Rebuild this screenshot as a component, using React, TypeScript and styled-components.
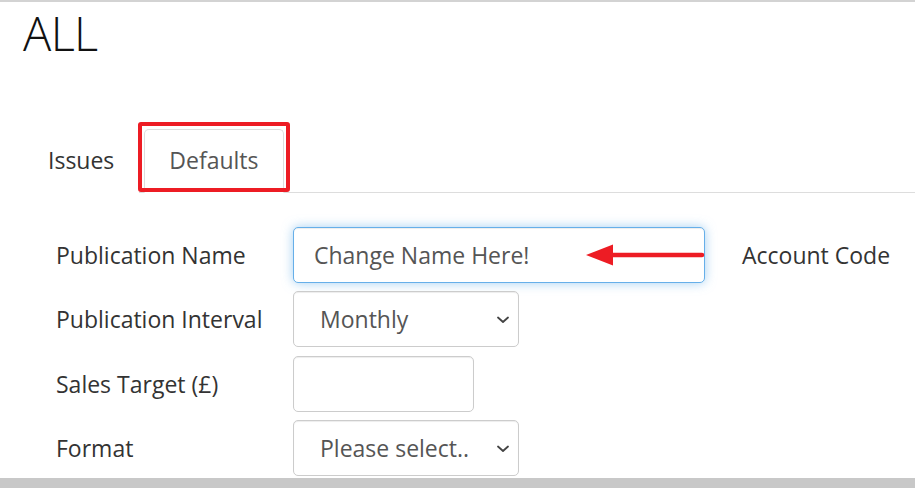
import React from "react";
import styled, { createGlobalStyle } from "styled-components";

const GlobalStyle = createGlobalStyle`
  html, body { margin: 0; padding: 0; background: #ffffff; }
  body { font-family: "Open Sans", "Liberation Sans", sans-serif; color: #333333; }
  * { box-sizing: border-box; }
`;

const Page = styled.div`
  width: 915px;
  height: 488px;
  border-top: 2px solid #d3d3d3;
  display: flex;
  flex-direction: column;
  overflow: hidden;
`;

const Content = styled.div`
  padding-left: 23px;
  display: flex;
  flex-direction: column;
`;

const Title = styled.h1`
  margin: 5px 0 0 0;
  font-size: 47px;
  line-height: 53px;
  font-weight: 300;
  color: #111111;
  letter-spacing: -0.6px;
`;

const TabList = styled.ul`
  list-style: none;
  margin: 69px 0 0 0;
  padding: 0;
  display: flex;
  border-bottom: 1px solid #dddddd;
`;

const TabItem = styled.li`
  margin: 0 5px -1px 0;
  position: relative;
`;

const TabLink = styled.a<{ $active?: boolean }>`
  display: block;
  padding: 14px 24px 16px;
  line-height: 32px;
  font-size: 23px;
  border: 1px solid ${(p) => (p.$active ? "#dddddd" : "transparent")};
  border-bottom-color: ${(p) => (p.$active ? "#ffffff" : "transparent")};
  border-radius: 5px 5px 0 0;
  color: ${(p) => (p.$active ? "#555555" : "#333333")};
  background: #ffffff;
  text-decoration: none;
`;

const Highlight = styled.span`
  position: absolute;
  left: -6px;
  right: -6px;
  top: -7px;
  bottom: 1px;
  border: 4px solid #ed1c24;
  border-radius: 3px;
  pointer-events: none;
`;

const Form = styled.div`
  margin-top: 34px;
  padding-left: 33px;
  display: flex;
  flex-direction: column;
  gap: 8.3px;
`;

const Row = styled.div`
  display: flex;
  align-items: center;
  height: 56px;
`;

const Label = styled.label`
  width: 237px;
  flex: none;
  font-size: 23px;
  color: #333333;
`;

const SideLabel = styled(Label)`
  width: auto;
  margin-left: 37px;
`;

const Field = styled.div<{ $width: number }>`
  position: relative;
  width: ${(p) => p.$width}px;
  height: 100%;
  flex: none;
`;

const TextInput = styled.input<{ $focused?: boolean }>`
  width: 100%;
  height: 100%;
  padding: 0 20px;
  font-family: "Open Sans", "Liberation Sans", sans-serif;
  font-size: 23px;
  color: #555555;
  background: #ffffff;
  border: 1px solid ${(p) => (p.$focused ? "#66afe9" : "#cccccc")};
  border-radius: 5px;
  box-shadow: ${(p) =>
    p.$focused
      ? "inset 0 1px 1px rgba(0,0,0,.075), 0 0 11px rgba(102,175,233,.6)"
      : "inset 0 1px 1px rgba(0,0,0,.075)"};
  outline: none;
`;

const Select = styled.select`
  width: 100%;
  height: 100%;
  appearance: none;
  -webkit-appearance: none;
  padding: 0 40px 0 26px;
  font-family: "Open Sans", "Liberation Sans", sans-serif;
  font-size: 23px;
  color: #555555;
  background: #ffffff;
  border: 1px solid #cccccc;
  border-radius: 5px;
  box-shadow: inset 0 1px 1px rgba(0,0,0,.075);
  outline: none;
`;

const Chevron = styled.svg`
  position: absolute;
  right: 10px;
  top: 50%;
  width: 12px;
  height: 8px;
  margin-top: -3px;
  pointer-events: none;
`;

const Arrow = styled.svg`
  position: absolute;
  left: 292px;
  top: 50%;
  width: 120px;
  height: 24px;
  margin-top: -12px;
  pointer-events: none;
`;

const BottomBar = styled.div`
  margin-top: auto;
  height: 10px;
  background: #c8c8c8;
  flex: none;
`;

const ChevronIcon = () => (
  <Chevron viewBox="0 0 12 8">
    <path d="M1 1.5 L6 6 L11 1.5" fill="none" stroke="#444" strokeWidth="1.8" strokeLinecap="round" strokeLinejoin="round" />
  </Chevron>
);

export default function App() {
  return (
    <>
      <GlobalStyle />
      <Page>
        <Content>
          <Title>ALL</Title>
          <TabList>
            <TabItem>
              <TabLink>Issues</TabLink>
            </TabItem>
            <TabItem>
              <TabLink $active>Defaults</TabLink>
              <Highlight />
            </TabItem>
          </TabList>
          <Form>
            <Row>
              <Label>Publication Name</Label>
              <Field $width={412}>
                <TextInput $focused defaultValue="Change Name Here!" />
                <Arrow viewBox="0 0 120 24">
                  <path d="M28 12 L117 12" stroke="#ed1c24" strokeWidth="4.5" strokeLinecap="round" />
                  <path d="M1 12 L28 1.5 L28 22.5 Z" fill="#ed1c24" />
                </Arrow>
              </Field>
              <SideLabel>Account Code</SideLabel>
            </Row>
            <Row>
              <Label>Publication Interval</Label>
              <Field $width={226}>
                <Select defaultValue="Monthly">
                  <option>Monthly</option>
                  <option>Weekly</option>
                </Select>
                <ChevronIcon />
              </Field>
            </Row>
            <Row>
              <Label>Sales Target (£)</Label>
              <Field $width={181}>
                <TextInput />
              </Field>
            </Row>
            <Row>
              <Label>Format</Label>
              <Field $width={226}>
                <Select defaultValue="Please select..">
                  <option>Please select..</option>
                </Select>
                <ChevronIcon />
              </Field>
            </Row>
          </Form>
        </Content>
        <BottomBar />
      </Page>
    </>
  );
}
